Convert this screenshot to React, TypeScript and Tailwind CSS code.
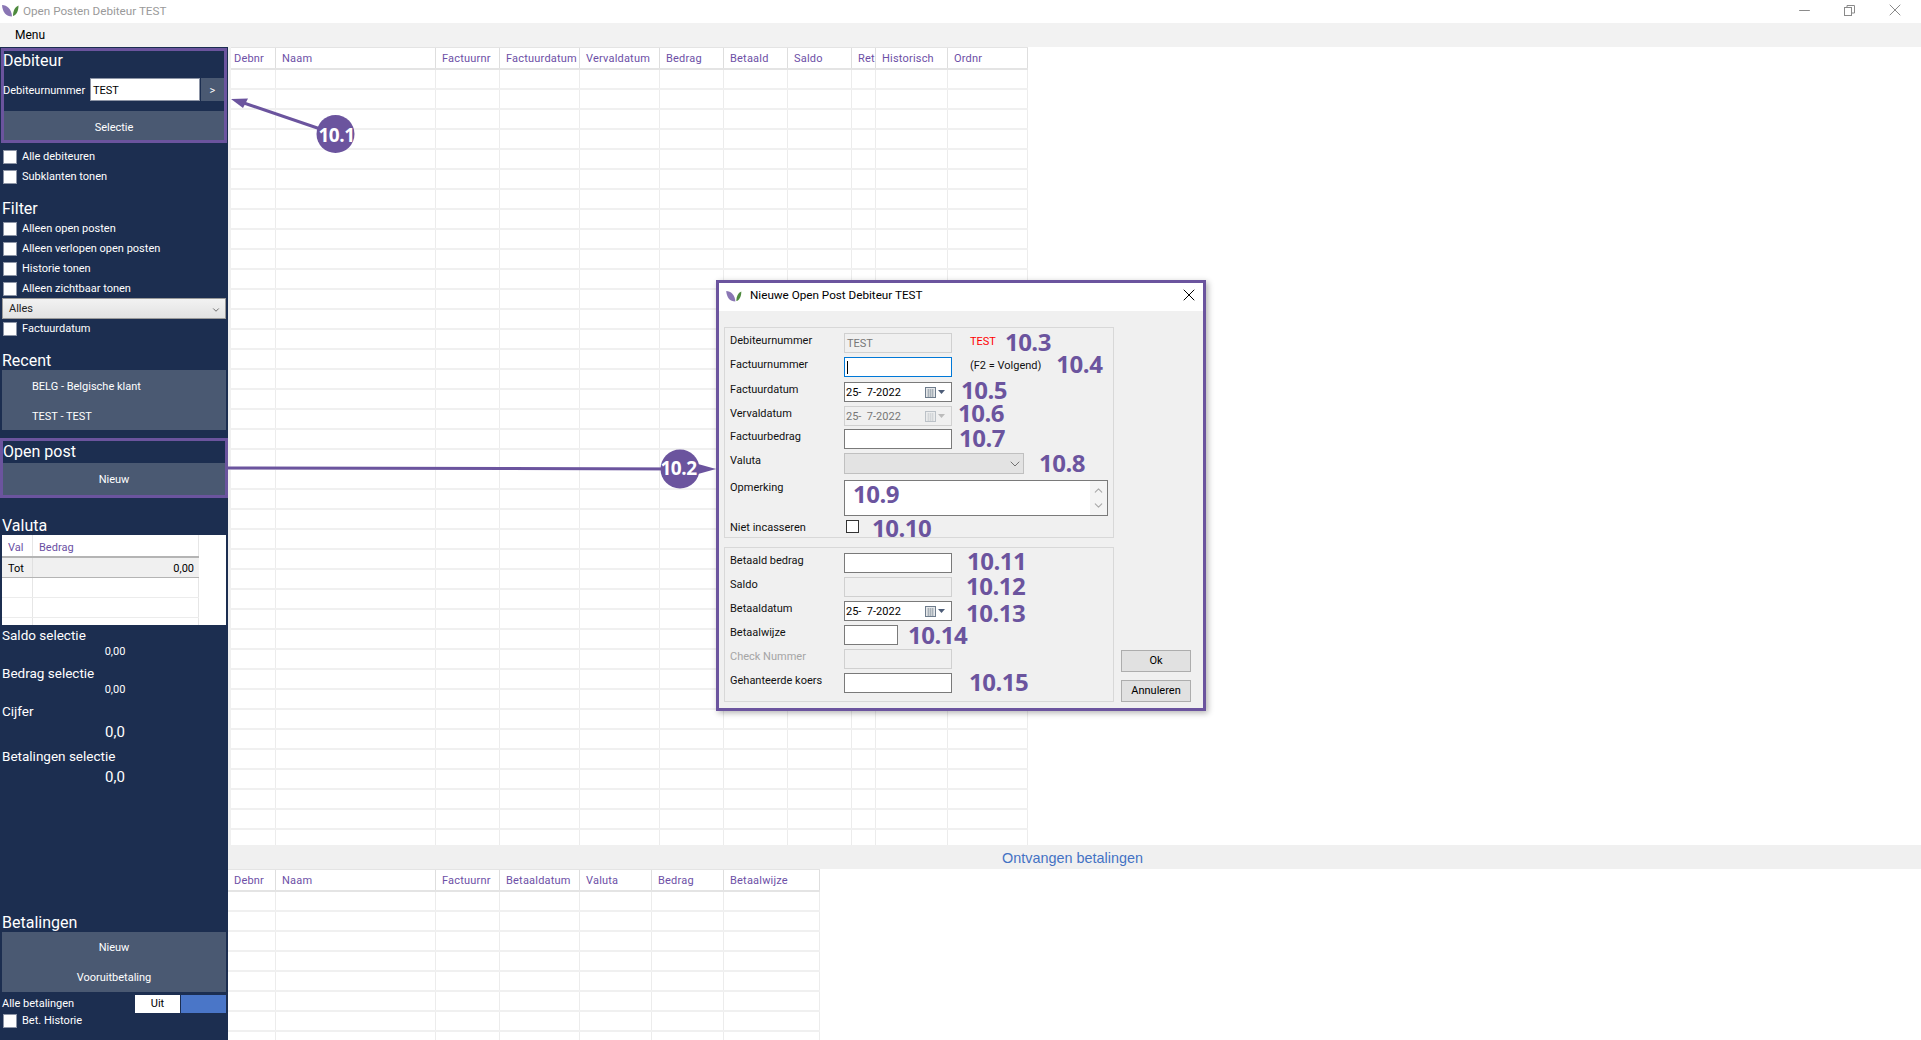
import React from 'react';
import { Minus, X, ChevronDown, ChevronUp } from 'lucide-react';

const uiFont = "font-['Roboto','Noto_Sans',sans-serif]";

const Logo: React.FC<{ className?: string }> = ({ className }) => (
  <svg viewBox="0 0 17 12" className={className}>
    <path d="M0 0C5 0 9.5 4 10 11.5C4 11.5 0.5 7 0 0Z" fill="#8a76b4" />
    <path d="M16.5 0.5C13 2 11 5.5 11 11C14.5 10 16.5 6 16.5 0.5Z" fill="#4e8a3e" />
  </svg>
);

const CheckBox: React.FC<{ label: string }> = ({ label }) => (
  <div className="flex h-5 items-center pl-[3px]">
    <span className="h-[14px] w-[14px] border border-[#8d95a6] bg-white" />
    <span className="ml-[5px] text-[11px] text-white">{label}</span>
  </div>
);

const SideButton: React.FC<{ label: string; left?: boolean; className?: string }> = ({ label, left, className = 'h-[30px] pt-[2px]' }) => (
  <div className={`flex items-center bg-[#4a5972] text-[11px] text-white ${left ? 'pl-[30px]' : 'justify-center'} ${className}`}>
    {label}
  </div>
);

const Heading: React.FC<{ label: string; className?: string }> = ({ label, className }) => (
  <div className={`text-[16px] leading-5 text-white ${className ?? ''}`}>{label}</div>
);

const Stat: React.FC<{ label: string; value: string; big?: boolean }> = ({ label, value, big }) => (
  <div className={big ? 'h-[45px]' : 'h-[38px]'}>
    <div className="h-[18px] text-[13.5px] leading-[18px] text-white">{label}</div>
    <div className={`text-center text-white ${big ? 'mt-[2px] text-[15px] leading-5' : 'text-[11px] leading-[16px]'}`}>{value}</div>
  </div>
);

const Sidebar: React.FC = () => (
  <aside className="flex w-[228px] shrink-0 flex-col bg-[#1c2e50]">
    <div className="mx-[1px] mt-[1px] flex h-[95px] flex-col border-[3px] border-[#6b549e]">
      <div className="-ml-[1px] h-[28px] text-[16px] leading-5 text-white">Debiteur</div>
      <div className="-ml-[1px] flex h-[23px] items-center">
        <span className="w-[87px] overflow-hidden whitespace-nowrap pt-[2px] text-[11px] text-white">Debiteurnummer</span>
        <span className="flex h-[23px] w-[110px] items-center border border-[#8d95a6] bg-white px-[2px] pt-[2px] text-[11px] text-black">TEST</span>
        <span className="ml-[1px] flex h-[23px] flex-1 items-center justify-center bg-[#4a5972] pt-[2px] text-[11px] text-white">&gt;</span>
      </div>
      <SideButton label="Selectie" className="mt-[10px] h-[29px] pt-[6px]" />
    </div>
    <div className="mt-[4px]">
      <CheckBox label="Alle debiteuren" />
      <CheckBox label="Subklanten tonen" />
    </div>
    <Heading label="Filter" className="mt-[12px] pl-[2px]" />
    <div>
      <CheckBox label="Alleen open posten" />
      <CheckBox label="Alleen verlopen open posten" />
      <CheckBox label="Historie tonen" />
      <CheckBox label="Alleen zichtbaar tonen" />
    </div>
    <div className="mx-[2px] mt-[-1px] flex h-[21px] items-center justify-between border border-[#9a9a9a] bg-gradient-to-b from-[#f2f2f2] to-[#e2e2e2] pl-[6px] pr-[4px] pt-[2px] text-[11px] text-[#222]">
      Alles
      <ChevronDown size={10} strokeWidth={2} className="text-[#555]" />
    </div>
    <CheckBox label="Factuurdatum" />
    <Heading label="Recent" className="mt-[12px] pl-[2px]" />
    <div className="mx-[2px] mt-[-1px]">
      <SideButton label="BELG - Belgische klant" left className="h-[30px] pt-[4px]" />
      <SideButton label="TEST - TEST" left className="h-[30px] pt-[4px]" />
    </div>
    <div className="mt-[8px] flex h-[60px] flex-col border-[3px] border-[#6b549e]">
      <div className="h-[22px] pt-[1px] text-[16px] leading-5 text-white">Open post</div>
      <SideButton label="Nieuw" className="h-[32px] pt-[2px]" />
    </div>
    <Heading label="Valuta" className="mt-[18px] h-[19px] pl-[2px]" />
    <div className="mx-[2px] h-[90px] overflow-hidden bg-white pr-[27px]">
      <div className="flex h-[23px] border-b-2 border-[#b4b4b4] text-[11px] text-[#6b4fa3]">
        <span className="flex w-[31px] items-center border-r border-[#e6e6e6] pl-[6px] pt-[5px]">Val</span>
        <span className="flex flex-1 items-center border-r border-[#e6e6e6] pl-[6px] pt-[5px]">Bedrag</span>
      </div>
      <div className="flex h-[20px] border-b border-[#b4b4b4] bg-[#f0f0f0] text-[11px] text-black">
        <span className="flex w-[31px] items-center border-r border-[#e0e0e0] pl-[6px] pt-[3px]">Tot</span>
        <span className="flex flex-1 items-center justify-end pr-[5px] pt-[3px]">0,00</span>
      </div>
      {[0, 1, 2].map((i) => (
        <div key={i} className="flex h-[20px] border-b border-[#ececec]">
          <span className="w-[31px] border-r border-[#e6e6e6]" />
          <span className="flex-1 border-r border-[#e6e6e6]" />
        </div>
      ))}
    </div>
    <div className="mt-[1px] pl-[2px]">
      <Stat label="Saldo selectie" value="0,00" />
      <Stat label="Bedrag selectie" value="0,00" />
      <Stat label="Cijfer" value="0,0" big />
      <Stat label="Betalingen selectie" value="0,0" big />
    </div>
    <Heading label="Betalingen" className="mt-auto pl-[2px]" />
    <div className="mx-[2px] mt-[-1px]">
      <SideButton label="Nieuw" />
      <SideButton label="Vooruitbetaling" />
    </div>
    <div className="mt-[3px] flex h-[18px] items-center justify-between px-[2px] text-[11px] text-white">
      Alle betalingen
      <span className="flex h-[18px] w-[91px]">
        <span className="flex w-[45px] items-center justify-center bg-white text-black">Uit</span>
        <span className="ml-[1px] flex-1 bg-[#4a76c8]" />
      </span>
    </div>
    <div className="-mt-[2px] mb-[9px]">
      <CheckBox label="Bet. Historie" />
    </div>
  </aside>
);

const Grid: React.FC<{ columns: [string, number, number][]; rows: number }> = ({ columns, rows }) => (
  <div className="w-fit overflow-hidden">
    <div className="flex h-[23px] border-t border-b-2 border-[#e4e4e4] bg-white">
      {columns.map(([name, w, pad]) => (
        <span key={name} style={{ width: w, paddingLeft: pad }} className="flex shrink-0 items-center overflow-hidden whitespace-nowrap border-r border-[#dedede] pt-[3px] text-[11px] tracking-[0.2px] text-[#6d4fa6]">
          {name}
        </span>
      ))}
    </div>
    {Array.from({ length: rows }).map((_, i) => (
      <div key={i} className="flex h-5 border-b-2 border-[#f0f0f0]">
        {columns.map(([name, w]) => (
          <span key={name} style={{ width: w }} className="shrink-0 border-r border-[#ececec]" />
        ))}
      </div>
    ))}
  </div>
);

const topColumns: [string, number, number][] = [
  ['Debnr', 45, 3], ['Naam', 160, 6], ['Factuurnr', 64, 6], ['Factuurdatum', 80, 6], ['Vervaldatum', 80, 6], ['Bedrag', 64, 6],
  ['Betaald', 64, 6], ['Saldo', 64, 6], ['Ret', 24, 6], ['Historisch', 72, 6], ['Ordnr', 80, 6],
];
const bottomColumns: [string, number, number][] = [
  ['Debnr', 48, 6], ['Naam', 160, 6], ['Factuurnr', 64, 6], ['Betaaldatum', 80, 6], ['Valuta', 72, 6], ['Bedrag', 72, 6], ['Betaalwijze', 96, 6],
];

const Field: React.FC<{ className?: string; disabled?: boolean; children?: React.ReactNode }> = ({ className = 'w-[108px] border-[#7a7a7a]', disabled, children }) => (
  <span className={`flex h-5 items-center border text-[11px] ${disabled ? 'w-[108px] border-[#d0d0d0] bg-[#f0f0f0] text-[#777]' : `bg-white text-black ${className}`}`}>
    {children}
  </span>
);

const DateField: React.FC<{ disabled?: boolean }> = ({ disabled }) => (
  <Field disabled={disabled}>
    <span className="pl-[1px] pt-[2px]">25-&nbsp;&nbsp;7-2022</span>
    <span className="ml-auto mr-[6px] flex items-center gap-[2px]">
      <svg width="11" height="11" viewBox="0 0 11 11" className={disabled ? 'opacity-40' : ''}>
        <rect x="0.5" y="0.5" width="10" height="10" fill="#e6e8ea" stroke="#6e7c8c" />
        <path d="M2 3h7M2 5h7M2 7h7M2 9h7M3.5 2v8M5.5 2v8M7.5 2v8" stroke="#9aa4ae" strokeWidth="0.7" />
      </svg>
      <svg width="7" height="4" viewBox="0 0 7 4">
        <path d="M0 0h7L3.5 4Z" fill={disabled ? '#bbbbbb' : '#4d5d78'} />
      </svg>
    </span>
  </Field>
);

const FormRow: React.FC<{ label: string; top: string; muted?: boolean; children: React.ReactNode }> = ({ label, top, muted, children }) => (
  <div className={`flex items-start ${top}`}>
    <span className={`w-[119px] pl-[5px] pt-[1px] text-[11px] leading-[14px] ${muted ? 'text-[#a5a5a5]' : 'text-[#111]'}`}>{label}</span>
    {children}
  </div>
);

const Num: React.FC<{ children: React.ReactNode; className?: string }> = ({ children, className }) => (
  <span className={`font-['Open_Sans',sans-serif] text-[24px] font-bold leading-5 tracking-[-0.5px] text-[#6b549e] ${className ?? ''}`}>{children}</span>
);

const Dialog: React.FC = () => (
  <div className="absolute left-[716px] top-[280px] flex h-[431px] w-[490px] flex-col border-[3px] border-[#6b549e] bg-[#f0f0f0] shadow-[2px_2px_6px_rgba(0,0,0,0.3)]">
    <div className="flex h-[28px] shrink-0 items-center bg-white pl-[7px] text-[11.7px] text-black">
      <Logo className="mb-[2px] h-[11px] w-[16px]" />
      <span className="mb-[2px] ml-[8px]">Nieuwe Open Post Debiteur TEST</span>
      <X size={20} strokeWidth={1.2} className="mb-[4px] ml-auto mr-[4px]" />
    </div>
    <div className="flex flex-1 pl-[5px]">
      <div className="w-[390px]">
        <div className="mt-[16px] h-[211px] border border-[#d8d8d8] pt-[5px]">
          <FormRow label="Debiteurnummer" top="">
            <Field disabled><span className="pl-[2px] pt-[2px]">TEST</span></Field>
            <span className="ml-[18px] pt-[2px] text-[11px] leading-[14px] text-[#ff0000]">TEST</span>
            <Num className="ml-[9px] -translate-y-[1px]">10.3</Num>
          </FormRow>
          <FormRow label="Factuurnummer" top="mt-[4px]">
            <Field className="w-[108px] border-[#0078d7]"><span className="ml-[2px] h-[13px] w-px bg-black" /></Field>
            <span className="ml-[18px] pt-[2px] text-[11px] leading-[14px] text-[#111]">(F2 = Volgend)</span>
            <Num className="ml-[15px] -translate-y-[3px]">10.4</Num>
          </FormRow>
          <FormRow label="Factuurdatum" top="mt-[5px]">
            <DateField />
            <Num className="ml-[9px] -translate-y-[2px]">10.5</Num>
          </FormRow>
          <FormRow label="Vervaldatum" top="mt-[4px]">
            <DateField disabled />
            <Num className="ml-[6px] -translate-y-[3px]">10.6</Num>
          </FormRow>
          <FormRow label="Factuurbedrag" top="mt-[3px]">
            <Field />
            <Num className="ml-[7px] -translate-y-[1px]">10.7</Num>
          </FormRow>
          <FormRow label="Valuta" top="mt-[4px]">
            <span className="flex h-[21px] w-[180px] items-center justify-end border border-[#c0c0c0] bg-[#e3e3e3]">
              <ChevronDown size={16} strokeWidth={1.2} className="text-[#555]" />
            </span>
            <Num className="ml-[15px]">10.8</Num>
          </FormRow>
          <FormRow label="Opmerking" top="mt-[6px]">
            <span className="relative flex h-[36px] w-[264px] items-start border border-[#7a7a7a] bg-white pl-[8px] pt-[3px]">
              <Num>10.9</Num>
              <span className="absolute right-0 top-0 flex h-full w-[17px] flex-col items-center justify-between bg-[#f4f4f4] py-[3px] text-[#aaa]">
                <ChevronUp size={13} strokeWidth={2} />
                <ChevronDown size={13} strokeWidth={2} />
              </span>
            </span>
          </FormRow>
          <FormRow label="Niet incasseren" top="mt-[4px]">
            <span className="ml-[2px] h-[13px] w-[13px] border border-[#333] bg-white" />
            <Num className="ml-[13px] -translate-y-[2px]">10.10</Num>
          </FormRow>
        </div>
        <div className="mt-[9px] h-[155px] border border-[#d8d8d8] pt-[5px]">
          <FormRow label="Betaald bedrag" top="">
            <Field />
            <Num className="ml-[15px] -translate-y-[2px]">10.11</Num>
          </FormRow>
          <FormRow label="Saldo" top="mt-[4px]">
            <Field disabled />
            <Num className="ml-[14px] -translate-y-[1px]">10.12</Num>
          </FormRow>
          <FormRow label="Betaaldatum" top="mt-[4px]">
            <DateField />
            <Num className="ml-[14px] translate-y-[2px]">10.13</Num>
          </FormRow>
          <FormRow label="Betaalwijze" top="mt-[4px]">
            <Field className="w-[54px] border-[#7a7a7a]" />
            <Num className="ml-[10px]">10.14</Num>
          </FormRow>
          <FormRow label="Check Nummer" top="mt-[4px]" muted>
            <Field disabled />
          </FormRow>
          <FormRow label="Gehanteerde koers" top="mt-[4px]">
            <Field />
            <Num className="ml-[17px] -translate-y-[1px]">10.15</Num>
          </FormRow>
        </div>
      </div>
      <div className="ml-[7px] flex w-[70px] flex-col">
        <span className="mt-[339px] flex h-[22px] items-center justify-center border border-[#adadad] bg-[#e1e1e1] text-[11px] text-black">Ok</span>
        <span className="mt-[8px] flex h-[22px] items-center justify-center border border-[#adadad] bg-[#e1e1e1] pt-[1px] text-[11px] text-black">Annuleren</span>
      </div>
    </div>
  </div>
);

const Callouts: React.FC = () => (
  <>
    <svg className="pointer-events-none absolute left-0 top-0" width="1921" height="1040">
      <path d="M335 134L241 102" stroke="#6b549e" strokeWidth="3" fill="none" />
      <path d="M231 99L248 98.5L243 108Z" fill="#6b549e" />
      <path d="M228 468L690 469" stroke="#6b549e" strokeWidth="3" fill="none" />
      <path d="M716 469L698 464V474Z" fill="#6b549e" />
      <circle cx="335.5" cy="134" r="19" fill="#6b549e" />
      <circle cx="680" cy="469" r="19.5" fill="#6b549e" />
    </svg>
    <span className="absolute left-[317px] top-[125px] w-[39px] text-center font-['Open_Sans',sans-serif] text-[19px] font-bold leading-5 tracking-[-0.5px] text-white">10.1</span>
    <span className="absolute left-[659px] top-[458px] w-[39px] text-center font-['Open_Sans',sans-serif] text-[19px] font-bold leading-5 tracking-[-0.5px] text-white">10.2</span>
  </>
);

export default function App() {
  return (
    <div className={`relative flex h-[1040px] w-[1921px] flex-col overflow-hidden bg-white ${uiFont}`}>
      <header className="flex h-[23px] shrink-0 items-center bg-white pl-[2px] text-[11.7px] text-[#9a9a9a]">
        <Logo className="mb-[1px] h-[12px] w-[17px]" />
        <span className="ml-[4px]">Open Posten Debiteur TEST</span>
        <div className="mb-[3px] ml-auto flex items-center text-[#8a8a8a]">
          <Minus size={17} strokeWidth={1.4} />
          <svg width="11" height="11" viewBox="0 0 11 11" className="ml-[31px]" fill="none" stroke="#8a8a8a">
            <rect x="0.5" y="2.5" width="7" height="8" />
            <path d="M3 2.5V0.5H10.5V8H7.5" />
          </svg>
          <X size={20} strokeWidth={1.2} className="ml-[30px] mr-[16px]" />
        </div>
      </header>
      <nav className="flex h-[24px] shrink-0 items-center bg-[#f2f2f2] pl-[15px] text-[12px] text-black">Menu</nav>
      <div className="flex min-h-0 flex-1">
        <Sidebar />
        <main className="flex min-w-0 flex-1 flex-col">
          <div className="h-[798px] shrink-0 overflow-hidden border-l-[3px] border-[#f0f0f0]">
            <Grid columns={topColumns} rows={39} />
          </div>
          <div className="flex h-[24px] shrink-0 items-center justify-center bg-[#f0f0f0] pr-[4px] pt-[4px] font-['Liberation_Sans',sans-serif] text-[14.4px] text-[#4472c4]">
            Ontvangen betalingen
          </div>
          <Grid columns={bottomColumns} rows={8} />
        </main>
      </div>
      <Dialog />
      <Callouts />
    </div>
  );
}
